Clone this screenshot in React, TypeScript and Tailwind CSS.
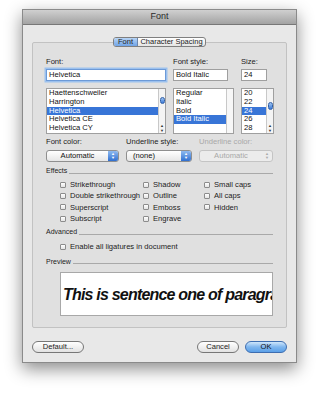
const fontList = ['Haettenschweiler', 'Harrington', 'Helvetica', 'Helvetica CE', 'Helvetica CY']
const styleList = ['Regular', 'Italic', 'Bold', 'Bold Italic']
const sizeList = ['20', '22', '24', '26', '28']

function Scrollbar({ thumb }: { thumb: string }) {
  return (
    <div className="w-[7px] border-l border-[#c8c8c8] bg-[#f4f4f4] flex flex-col">
      <div className="flex-1 relative">
        <div className={`absolute left-[1px] w-[5px] rounded-full bg-gradient-to-b from-[#9cc3f0] to-[#3a78d6] border border-[#2f5fa8] ${thumb}`} />
      </div>
      <div className="h-[5px] flex items-center justify-center text-[4px] leading-none text-[#333]">▲</div>
      <div className="h-[5px] flex items-center justify-center text-[4px] leading-none text-[#333]">▼</div>
    </div>
  )
}

function ListBox({ items, selected, width, thumb }: { items: string[]; selected: number; width: string; thumb?: string }) {
  return (
    <div className={`${width} h-[46px] bg-white border border-[#9f9f9f] flex overflow-hidden`}>
      <div className="flex-1 flex flex-col">
        {items.map((it, i) => (
          <div
            key={it}
            className={`h-[8.8px] leading-[8.8px] pl-[2px] ${i === selected ? 'bg-[#3875d7] text-white' : 'text-[#111]'}`}
          >
            {it}
          </div>
        ))}
      </div>
      {thumb ? <Scrollbar thumb={thumb} /> : <div className="w-[7px] border-l border-[#c8c8c8] bg-[#f7f7f7]" />}
    </div>
  )
}

function Popup({ label, width, disabled, align }: { label: string; width: string; disabled?: boolean; align?: string }) {
  return (
    <div
      className={`${width} h-[12px] rounded-[3px] border flex items-stretch overflow-hidden ${
        disabled ? 'border-[#c4c4c4] bg-[#ececec] text-[#a8a8a8]' : 'border-[#8f8f8f] bg-gradient-to-b from-white to-[#e6e6e6] text-[#111]'
      }`}
    >
      <div className={`flex-1 flex items-center ${align ?? 'justify-center'} leading-none`}>{label}</div>
      <div
        className={`w-[10px] flex flex-col items-center justify-center text-[4px] leading-[4px] ${
          disabled ? 'text-[#aaa]' : 'bg-gradient-to-b from-[#8fbaf0] to-[#2f6fd0] text-white'
        }`}
      >
        <span>▲</span>
        <span>▼</span>
      </div>
    </div>
  )
}

function Check({ label }: { label: string }) {
  return (
    <div className="h-[11.3px] flex items-center gap-[4px] whitespace-nowrap">
      <div className="w-[6px] h-[6px] border border-[#8c8c8c] bg-gradient-to-b from-white to-[#e4e4e4] rounded-[1px]" />
      <span>{label}</span>
    </div>
  )
}

function Section({ title }: { title: string }) {
  return (
    <div className="flex items-center gap-[2px] h-[9px]">
      <span className="text-[7px]">{title}</span>
      <div className="flex-1 h-px bg-[#a9a9a9] mt-[3px]" />
    </div>
  )
}

function Button({ label, width, primary }: { label: string; width: string; primary?: boolean }) {
  return (
    <div
      className={`${width} h-[12px] rounded-full border flex items-center justify-center leading-none ${
        primary
          ? 'border-[#3d6db0] bg-gradient-to-b from-[#cfe6fb] via-[#7fb6ee] to-[#5aa0e8] text-[#111]'
          : 'border-[#777] bg-gradient-to-b from-white to-[#e2e2e2] text-[#222]'
      }`}
    >
      {label}
    </div>
  )
}

export default function App() {
  return (
    <div className="w-[320px] h-[395px] bg-white overflow-hidden font-['Liberation_Sans',Arial,sans-serif] text-[7.6px] text-[#222]">
      <div className="ml-[22px] mt-[9px] w-[275px] shadow-[0_6px_16px_rgba(0,0,0,0.45)] border border-[#8a8a8a]">
        {/* Title bar */}
        <div className="h-[15px] bg-gradient-to-b from-[#d0d0d0] to-[#a3a3a3] border-b border-[#777] flex items-center justify-center text-[9px] text-[#2a2a2a]">
          Font
        </div>

        <div className="bg-[#e8e8e8] px-[9px] pt-[12px] pb-[9px]">
          {/* Tabs */}
          <div className="flex justify-center relative z-10">
            <div className="flex h-[10px] rounded-[3px] border border-[#7f7f7f] overflow-hidden bg-gradient-to-b from-white to-[#e4e4e4] text-[7.5px] leading-none">
              <div className="w-[24px] flex items-center justify-center bg-gradient-to-b from-[#b7d4f5] to-[#6fa3e6] border-r border-[#6c86ad]">Font</div>
              <div className="w-[67px] flex items-center justify-center">Character Spacing</div>
            </div>
          </div>

          {/* Group box */}
          <div className="-mt-[5px] h-[286px] border border-[#c2c2c2] bg-[#e0e0e0] rounded-[2px] pl-[13px] pr-[13px] pt-[15px]">
            <div className="flex gap-[7px]">
              <div className="flex flex-col w-[120px]">
                <div className="h-[8px] leading-[8px] mb-[3px]">Font:</div>
                <div className="h-[12px] border border-[#6c9ad8] bg-white shadow-[0_0_0_1.5px_#9cc1ee] pl-[2px] leading-[10px] text-[#111]">Helvetica</div>
                <div className="h-[7px]" />
                <ListBox items={fontList} selected={2} width="w-[120px]" thumb="top-[8px] h-[7px]" />
              </div>
              <div className="flex flex-col w-[61px]">
                <div className="h-[8px] leading-[8px] mb-[3px]">Font style:</div>
                <div className="w-[55px] h-[12px] border border-[#9f9f9f] bg-white pl-[2px] leading-[10px] text-[#111]">Bold Italic</div>
                <div className="h-[7px]" />
                <ListBox items={styleList} selected={3} width="w-[61px]" />
              </div>
              <div className="flex flex-col w-[33px]">
                <div className="h-[8px] leading-[8px] mb-[3px]">Size:</div>
                <div className="w-[26px] h-[12px] border border-[#9f9f9f] bg-white pl-[2px] leading-[10px] text-[#111]">24</div>
                <div className="h-[7px]" />
                <ListBox items={sizeList} selected={2} width="w-[33px]" thumb="top-[13px] h-[8px]" />
              </div>
            </div>

            {/* Color/underline row */}
            <div className="flex mt-[4px]">
              <div className="w-[81px] flex flex-col gap-[4px]">
                <div className="h-[8px] leading-[8px]">Font color:</div>
                <Popup label="Automatic" width="w-[73px]" />
              </div>
              <div className="w-[74px] flex flex-col gap-[4px]">
                <div className="h-[8px] leading-[8px]">Underline style:</div>
                <Popup label="(none)" width="w-[66px]" align="justify-start pl-[6px]" />
              </div>
              <div className="w-[74px] flex flex-col gap-[4px]">
                <div className="h-[8px] leading-[8px] text-[#a8a8a8]">Underline color:</div>
                <Popup label="Automatic" width="w-[74px]" disabled />
              </div>
            </div>

            {/* Effects */}
            <div className="mt-[5px]">
              <Section title="Effects" />
              <div className="flex mt-[3px] pl-[14px]">
                <div className="w-[83px] flex flex-col">
                  <Check label="Strikethrough" />
                  <Check label="Double strikethrough" />
                  <Check label="Superscript" />
                  <Check label="Subscript" />
                </div>
                <div className="w-[61px] flex flex-col">
                  <Check label="Shadow" />
                  <Check label="Outline" />
                  <Check label="Emboss" />
                  <Check label="Engrave" />
                </div>
                <div className="flex flex-col">
                  <Check label="Small caps" />
                  <Check label="All caps" />
                  <Check label="Hidden" />
                </div>
              </div>
            </div>

            {/* Advanced */}
            <div className="mt-[4px]">
              <Section title="Advanced" />
              <div className="pl-[14px] mt-[4px]">
                <Check label="Enable all ligatures in document" />
              </div>
            </div>

            {/* Preview */}
            <div className="mt-[5px]">
              <Section title="Preview" />
              <div className="ml-[14px] mt-[6px] h-[44px] bg-white border border-[#a8a8a8] overflow-hidden flex items-center">
                <span className="whitespace-nowrap pl-[2px] pt-[2px] text-[16px] font-bold italic text-[#111] tracking-[-0.8px]">
                  This is sentence one of paragraph one.
                </span>
              </div>
            </div>
          </div>

          {/* Buttons */}
          <div className="flex items-center mt-[13px]">
            <Button label="Default..." width="w-[52px]" />
            <div className="flex-1" />
            <Button label="Cancel" width="w-[42px]" />
            <div className="w-[6px]" />
            <Button label="OK" width="w-[42px]" primary />
          </div>
        </div>
      </div>
    </div>
  )
}
